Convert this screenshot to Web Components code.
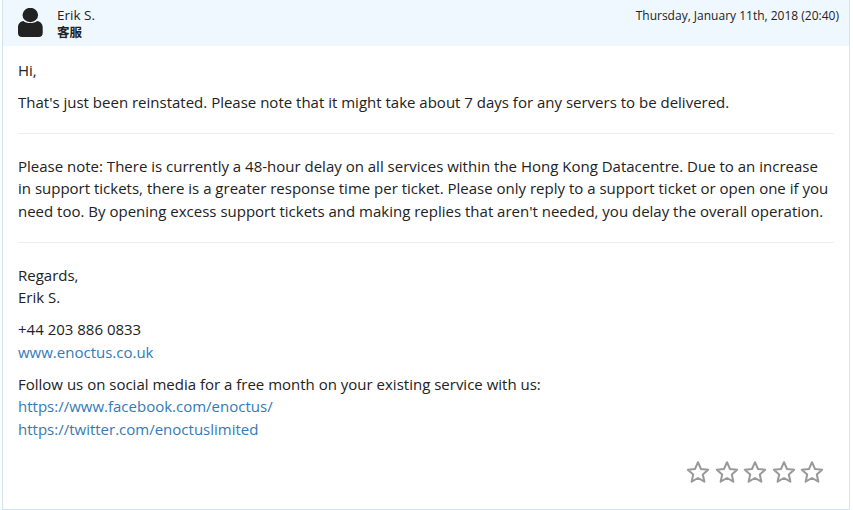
<!DOCTYPE html>
<html>
<head>
<meta charset="utf-8">
<style>
  html, body { margin: 0; background: #fff; }
  body { padding: 0 3px 0 2px; font-family: "Open Sans", sans-serif; }
  a { color: #337ab7; text-decoration: none; }
</style>
</head>
<body>
<ticket-reply>
  <reply-header slot="header" name="Erik S." role="客服" date="Thursday, January 11th, 2018 (20:40)"></reply-header>
  <p>Hi,</p>
  <p>That's just been reinstated. Please note that it might take about 7 days for any servers to be delivered.</p>
  <hr>
  <p>Please note: There is currently a 48-hour delay on all services within the Hong Kong Datacentre. Due to an increase in support tickets, there is a greater response time per ticket. Please only reply to a support ticket or open one if you need too. By opening excess support tickets and making replies that aren't needed, you delay the overall operation.</p>
  <hr>
  <p>Regards,<br>Erik S.</p>
  <p>+44 203 886 0833<br><a href="#">www.enoctus.co.uk</a></p>
  <p>Follow us on social media for a free month on your existing service with us:<br><a href="#">https://www.facebook.com/enoctus/</a><br><a href="#">https://twitter.com/enoctuslimited</a></p>
  <star-rating slot="footer"></star-rating>
</ticket-reply>

<script>
class TicketReply extends HTMLElement {
  constructor() {
    super();
    this.attachShadow({ mode: "open" });
  }

  connectedCallback() {
    this.shadowRoot.innerHTML = `
      <style>
        :host {
          display: block;
          box-sizing: border-box;
          height: 510px;
          border: 1px solid #d0e4f5;
          border-top: 0;
          color: #222;
          font-size: 15px;
          line-height: 22.5px;
        }
        .body { padding: 12.5px 15px 0 15px; }
        ::slotted(p) { margin: 0 0 9.5px 0; }
        ::slotted(hr) {
          border: 0;
          border-top: 1px solid #eee;
          margin: 20px 0 20.5px 0;
        }
      </style>
      <slot name="header"></slot>
      <div class="body"><slot></slot></div>
      <slot name="footer"></slot>
    `;
  }
}

class ReplyHeader extends HTMLElement {
  constructor() {
    super();
    this.attachShadow({ mode: "open" });
  }

  connectedCallback() {
    const name = this.getAttribute("name") || "";
    const role = this.getAttribute("role") || "";
    const date = this.getAttribute("date") || "";

    this.shadowRoot.innerHTML = `
      <style>
        :host {
          display: flex;
          justify-content: space-between;
          box-sizing: border-box;
          height: 46px;
          background: #f0f8ff;
          padding: 6px 10px 0 15px;
          font-size: 13.5px;
          line-height: 18px;
        }
        .who { display: flex; }
        svg { display: block; width: 25px; height: 29px; margin-top: 2px; }
        .names { margin-left: 14px; }
        strong { display: block; font-family: "Open Sans", "Noto Sans CJK SC", sans-serif; font-size: 12.5px; line-height: 17px; }
        .date { font-size: 12px; margin-top: 1px; line-height: 17px; }
      </style>
      <div class="who">
        <svg viewBox="0 0 25 29">
          <ellipse cx="12.3" cy="7" rx="7.8" ry="7.2" fill="#222"/>
          <path d="M5.5 13 C8 15.8 16.5 15.8 19 13 C22.5 13.5 24.7 16 24.7 19.5 V25 C24.7 27.5 23.2 29 20.7 29 H4 C1.5 29 0 27.5 0 25 V19.5 C0 16 2 13.5 5.5 13 Z" fill="#222"/>
        </svg>
        <div class="names">${name}<strong>${role}</strong></div>
      </div>
      <div class="date">${date}</div>
    `;
  }
}

class StarRating extends HTMLElement {
  constructor() {
    super();
    this.attachShadow({ mode: "open" });
  }

  connectedCallback() {
    const star = `<svg viewBox="0 0 24 24"><path d="M12 2.2 L15 9 L22.2 9.7 L16.8 14.5 L18.4 21.7 L12 18 L5.6 21.7 L7.2 14.5 L1.8 9.7 L9 9 Z" fill="none" stroke="#999" stroke-width="2" stroke-linejoin="round"/></svg>`;
    this.shadowRoot.innerHTML = `
      <style>
        :host {
          display: flex;
          justify-content: flex-end;
          gap: 4.5px;
          padding: 10.5px 25px 0 0;
        }
        svg { display: block; width: 24px; height: 24px; }
      </style>
      ${star.repeat(5)}
    `;
  }
}

customElements.define("ticket-reply", TicketReply);
customElements.define("reply-header", ReplyHeader);
customElements.define("star-rating", StarRating);
</script>
</body>
</html>
